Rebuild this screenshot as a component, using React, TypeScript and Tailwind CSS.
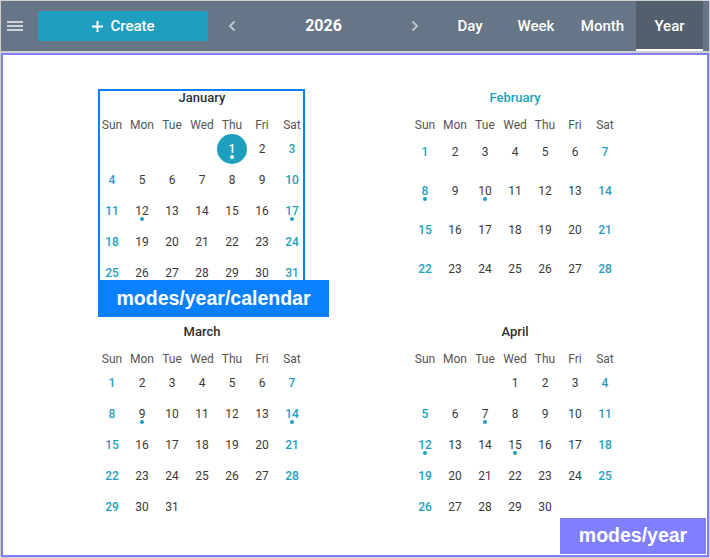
import React from "react";

const YEAR = 2026;
const WEEKDAYS = ["Sun", "Mon", "Tue", "Wed", "Thu", "Fri", "Sat"];
const MONTHS = ["January", "February", "March", "April"];
const TABS = [
  { label: "Day", w: "w-[66px]" },
  { label: "Week", w: "w-[66px]" },
  { label: "Month", w: "w-[67px]" },
  { label: "Year", w: "w-[67px]" },
];

// days of each month that carry an event marker
const EVENTS: Record<number, number[]> = {
  0: [1, 12, 17],
  1: [8, 10],
  2: [9, 14],
  3: [7, 12, 15],
};

type Week = (number | null)[];

function weeksOf(month: number): Week[] {
  const first = new Date(YEAR, month, 1).getDay();
  const total = new Date(YEAR, month + 1, 0).getDate();
  const cells: (number | null)[] = [
    ...Array(first).fill(null),
    ...Array.from({ length: total }, (_, i) => i + 1),
  ];
  while (cells.length % 7) cells.push(null);
  const weeks: Week[] = [];
  for (let i = 0; i < cells.length; i += 7) weeks.push(cells.slice(i, i + 7));
  return weeks;
}

const DayCell: React.FC<{ day: number | null; col: number; month: number }> = ({ day, col, month }) => {
  if (day === null) return <div />;
  const isToday = month === 0 && day === 1;
  const weekend = col === 0 || col === 6;
  const hasEvent = EVENTS[month]?.includes(day);

  return (
    <div className="relative flex items-center justify-center">
      {isToday && <span className="absolute w-[30px] h-[30px] rounded-full bg-[#1e9fc0]" />}
      <span
        className={`relative text-[12px] leading-none ${
          isToday ? "text-white font-medium" : weekend ? "text-[#1e9fc0] font-medium" : "text-[#3a3a3a]"
        }`}
      >
        {day}
      </span>
      {hasEvent && (
        <span
          className={`absolute left-1/2 top-[calc(50%+6px)] w-[4px] h-[4px] -translate-x-1/2 rounded-full ${
            isToday ? "bg-white" : "bg-[#1e9fc0]"
          }`}
        />
      )}
    </div>
  );
};

const MonthBlock: React.FC<{ month: number }> = ({ month }) => {
  const weeks = weeksOf(month);
  const highlighted = month === 1;

  return (
    <div className="relative w-[210px] h-[198px] flex flex-col">
      <div
        className={`h-[16px] leading-[16px] text-center text-[13px] font-medium ${
          highlighted ? "text-[#1e9fc0]" : "text-[#2f2f2f]"
        }`}
      >
        {MONTHS[month]}
      </div>
      <div className="mt-[11px] grid grid-cols-7 h-[16px]">
        {WEEKDAYS.map((d) => (
          <div key={d} className="text-center text-[12px] leading-[16px] text-[#555]">
            {d}
          </div>
        ))}
      </div>
      <div className="flex-1 flex flex-col">
        {weeks.map((week, wi) => (
          <div key={wi} className="flex-1 grid grid-cols-7">
            {week.map((day, ci) => (
              <DayCell key={ci} day={day} col={ci} month={month} />
            ))}
          </div>
        ))}
      </div>

      {month === 0 && (
        <>
          <div className="absolute left-px top-[-1px] w-[207px] h-[199px] border-2 border-[#0a80ff] pointer-events-none" />
          <div className="absolute left-px top-[190px] w-[231px] h-[37px] bg-[#0a80ff] flex items-center justify-center text-white text-[19.5px] font-bold font-['Liberation_Sans',Arial,sans-serif]">
            modes/year/calendar
          </div>
        </>
      )}
    </div>
  );
};

const Chevron: React.FC<{ dir: "left" | "right" }> = ({ dir }) => (
  <svg width="8" height="10" viewBox="0 0 8 10" fill="none">
    <path
      d={dir === "left" ? "M6 1L2 5l4 4" : "M2 1l4 4-4 4"}
      stroke="#b9c2cb"
      strokeWidth="2"
      strokeLinecap="round"
      strokeLinejoin="round"
    />
  </svg>
);

export default function App() {
  return (
    <div className="w-[710px] h-[558px] bg-[#cfcfcf] p-px flex flex-col font-['Roboto','Noto_Sans',sans-serif]">
      {/* toolbar */}
      <header className="h-[50px] bg-[#667686] flex items-center">
        <button className="ml-[6px] w-[16px] flex flex-col gap-[2px]">
          <span className="h-[2px] bg-[#cdd3d9]" />
          <span className="h-[2px] bg-[#cdd3d9]" />
          <span className="h-[2px] bg-[#cdd3d9]" />
        </button>
        <button className="ml-[15px] w-[170px] h-[30px] rounded-[2px] bg-[#1e9fc0] flex items-center justify-center gap-[6px] text-white text-[15px] font-medium">
          <svg width="13" height="13" viewBox="0 0 13 13">
            <path d="M6.5 1v11M1 6.5h11" stroke="white" strokeWidth="2" />
          </svg>
          Create
        </button>
        <button className="ml-[8px] w-[32px] h-[30px] flex items-center justify-center">
          <Chevron dir="left" />
        </button>
        <div className="w-[151px] text-center text-white text-[16px] font-bold">2026</div>
        <button className="w-[32px] h-[30px] flex items-center justify-center">
          <Chevron dir="right" />
        </button>
        <nav className="ml-[6px] flex h-full">
          {TABS.map((t) => {
            const active = t.label === "Year";
            return (
              <div
                key={t.label}
                className={`${t.w} h-full flex items-center justify-center text-white text-[15px] font-medium ${
                  active ? "bg-[#535f6c] border-b-2 border-white pt-[2px]" : ""
                }`}
              >
                {t.label}
              </div>
            );
          })}
        </nav>
      </header>

      {/* year view */}
      <main className="relative mt-[2px] h-[504px] bg-white border-2 border-[#8080ff]">
        <div className="pt-[35px] pl-[94px] grid grid-cols-[210px_210px] gap-x-[103px] gap-y-[36px]">
          {MONTHS.map((_, i) => (
            <MonthBlock key={i} month={i} />
          ))}
        </div>
        <div className="absolute right-px bottom-px w-[146px] h-[36px] bg-[#8080ff] flex items-center justify-center text-white text-[19.5px] font-bold font-['Liberation_Sans',Arial,sans-serif]">
          modes/year
        </div>
      </main>
    </div>
  );
}
